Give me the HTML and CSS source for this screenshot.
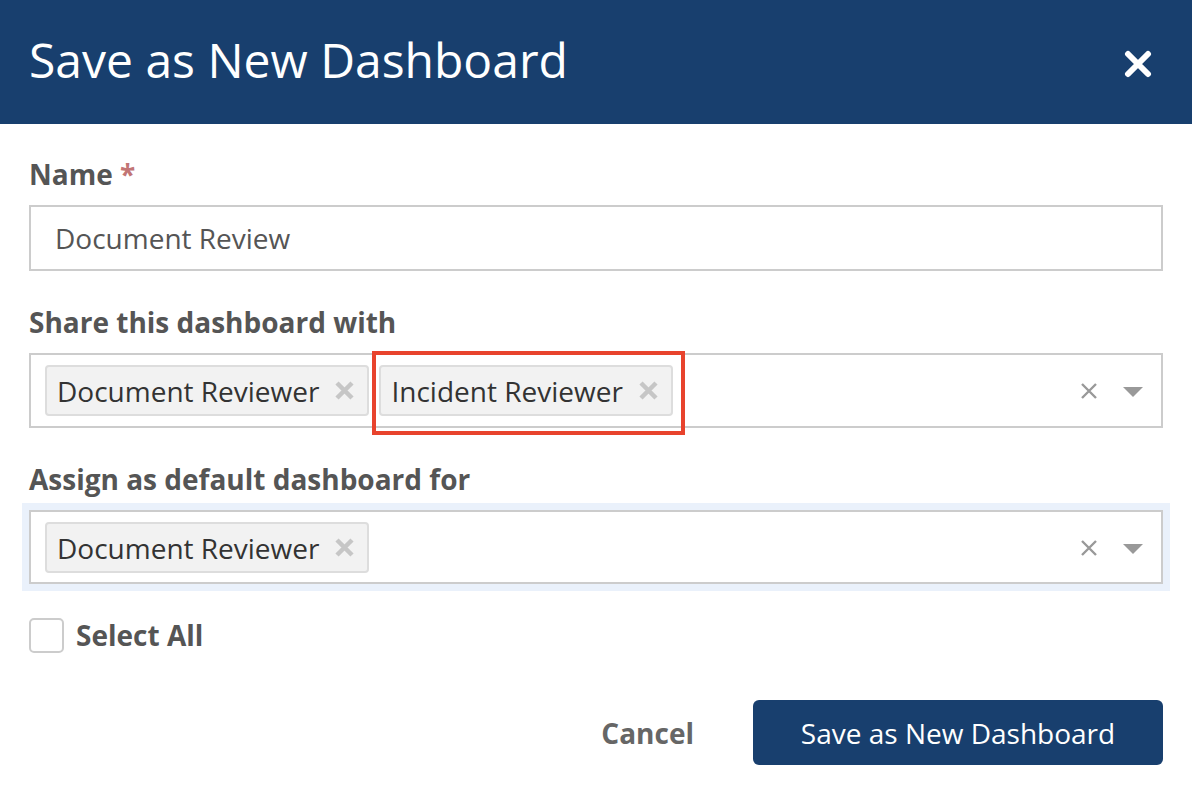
FILE: index.html
```html
<!DOCTYPE html>
<html>
<head>
<meta charset="utf-8">
<link rel="stylesheet" href="styles.css">
</head>
<body>
<div class="modal">
  <div class="header">
    <h1 class="title">Save as New Dashboard</h1>
    <svg class="close" width="28" height="28" viewBox="0 0 28 28"><path d="M4 4 L24 24 M24 4 L4 24" stroke="#fff" stroke-width="6" stroke-linecap="round"/></svg>
  </div>
  <div class="body">
    <div class="group">
      <div class="label">Name <span class="req">*</span></div>
      <div class="input">Document Review</div>
    </div>
    <div class="group">
      <div class="label">Share this dashboard with</div>
      <div class="select">
        <div class="tags">
          <div class="tag">Document Reviewer<svg class="tag-x" width="21" height="21" viewBox="0 0 21 21"><path d="M3 3 L18 18 M18 3 L3 18" stroke="#c6c6c6" stroke-width="4.5"/></svg></div>
          <div class="tag">Incident Reviewer<svg class="tag-x" width="21" height="21" viewBox="0 0 21 21"><path d="M3 3 L18 18 M18 3 L3 18" stroke="#c6c6c6" stroke-width="4.5"/></svg><span class="redbox"></span></div>
        </div>
        <div class="controls">
          <svg class="clear" width="18" height="18" viewBox="0 0 18 18"><path d="M2 2 L16 16 M16 2 L2 16" stroke="#999" stroke-width="2.4"/></svg>
          <svg class="caret" width="20" height="10" viewBox="0 0 20 10"><path d="M0 0 L20 0 L10 10 Z" fill="#999"/></svg>
        </div>
      </div>
    </div>
    <div class="group">
      <div class="label">Assign as default dashboard for</div>
      <div class="select focused">
        <div class="tags">
          <div class="tag">Document Reviewer<svg class="tag-x" width="21" height="21" viewBox="0 0 21 21"><path d="M3 3 L18 18 M18 3 L3 18" stroke="#c6c6c6" stroke-width="4.5"/></svg></div>
        </div>
        <div class="controls">
          <svg class="clear" width="18" height="18" viewBox="0 0 18 18"><path d="M2 2 L16 16 M16 2 L2 16" stroke="#999" stroke-width="2.4"/></svg>
          <svg class="caret" width="20" height="10" viewBox="0 0 20 10"><path d="M0 0 L20 0 L10 10 Z" fill="#999"/></svg>
        </div>
      </div>
    </div>
    <label class="check">
      <span class="box"></span>
      <span class="check-label">Select All</span>
    </label>
    <div class="actions">
      <span class="cancel">Cancel</span>
      <span class="save">Save as New Dashboard</span>
    </div>
  </div>
</div>
</body>
</html>
```

FILE: styles.css
```css
* { box-sizing: border-box; }
html, body {
  margin: 0;
  padding: 0;
  background: #fff;
  font-family: "Open Sans", "Noto Sans", sans-serif;
  color: #555;
}
.modal { width: 1192px; }
.header {
  height: 124px;
  background: #183f6e;
  display: flex;
  align-items: center;
  justify-content: space-between;
  padding: 0 40px 0 29px;
}
.title {
  margin: 0;
  font-weight: 400;
  font-size: 48px;
  color: #fff;
  line-height: 1;
  padding-bottom: 4px;
}
.close { display: block; margin-top: 4px; }
.body { padding: 31px 29px 0 29px; }
.group { margin-bottom: 32px; }
.label {
  font-weight: 700;
  font-size: 28px;
  line-height: 38px;
  color: #555;
  margin-bottom: 12px;
}
.req { color: #c27575; }
.input {
  height: 66px;
  border: 2px solid #ccc;
  padding: 0 24px;
  display: flex;
  align-items: center;
  font-size: 28px;
  color: #555;
}
.select {
  height: 75px;
  border: 2px solid #ccc;
  display: flex;
  align-items: flex-start;
  justify-content: space-between;
  padding: 10px 18px 0 14px;
}
.select.focused {
  height: 74px;
  box-shadow: 0 0 0 7px #eaf1fb;
}
.tags { display: flex; gap: 10px; }
.tag {
  position: relative;
  height: 51px;
  background: #f2f2f2;
  border: 2px solid #ddd;
  border-radius: 4px;
  display: flex;
  align-items: center;
  padding: 0 12px 0 10px;
  font-size: 28px;
  color: #333;
  white-space: pre;
}
.tag-x {
  display: block;
  margin-left: 15px;
}
.redbox {
  position: absolute;
  left: -9px;
  right: -14px;
  top: -16px;
  bottom: -21px;
  border: 4px solid #e8432d;
  pointer-events: none;
}
.controls {
  display: flex;
  align-items: center;
  gap: 25px;
  height: 51px;
}
.clear { display: block; }
.caret { display: block; margin-top: 3px; }
.check {
  display: flex;
  align-items: center;
  gap: 12px;
  margin-top: 32px;
}
.box {
  width: 35px;
  height: 35px;
  border: 2px solid #ccc;
  border-radius: 5px;
}
.check-label {
  font-weight: 700;
  font-size: 28px;
  color: #555;
}
.actions {
  display: flex;
  justify-content: flex-end;
  align-items: center;
  margin-top: 46px;
}
.cancel {
  font-weight: 700;
  font-size: 28px;
  color: #666;
  margin-right: 59px;
}
.save {
  width: 410px;
  height: 65px;
  background: #183f6e;
  color: #fff;
  border-radius: 6px;
  display: flex;
  align-items: center;
  justify-content: center;
  font-size: 28px;
}
```
